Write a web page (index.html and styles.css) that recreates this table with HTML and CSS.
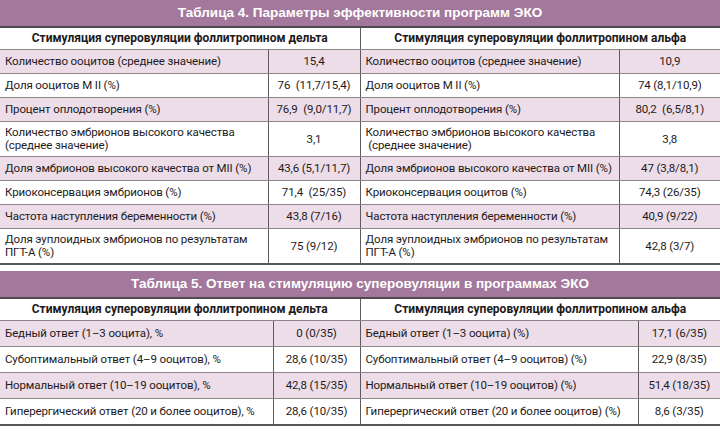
FILE: index.html
```html
<!DOCTYPE html>
<html lang="ru">
<head>
<meta charset="utf-8">
<link rel="stylesheet" href="styles.css">
</head>
<body>
<div class="page">
  <section class="tbl t4">
    <div class="title">Таблица 4. Параметры эффективности программ ЭКО</div>
    <table>
      <colgroup><col class="c1"><col class="c2"><col class="c3"><col class="c4"></colgroup>
      <thead>
        <tr><th colspan="2">Стимуляция суперовуляции фоллитропином дельта</th><th colspan="2" class="mid">Стимуляция суперовуляции фоллитропином альфа</th></tr>
      </thead>
      <tbody>
        <tr class="alt"><td>Количество ооцитов (среднее значение)</td><td class="v">15,4</td><td class="mid">Количество ооцитов (среднее значение)</td><td class="v">10,9</td></tr>
        <tr><td>Доля ооцитов M II (%)</td><td class="v">76&nbsp; (11,7/15,4)</td><td class="mid">Доля ооцитов M II (%)</td><td class="v">74 (8,1/10,9)</td></tr>
        <tr class="alt"><td>Процент оплодотворения (%)</td><td class="v">76,9&nbsp; (9,0/11,7)</td><td class="mid">Процент оплодотворения (%)</td><td class="v">80,2&nbsp; (6,5/8,1)</td></tr>
        <tr class="tall"><td>Количество эмбрионов высокого качества<br>(среднее значение)</td><td class="v">3,1</td><td class="mid">Количество эмбрионов высокого качества<br>&nbsp;(среднее значение)</td><td class="v">3,8</td></tr>
        <tr class="alt"><td>Доля эмбрионов высокого качества от MII (%)</td><td class="v">43,6 (5,1/11,7)</td><td class="mid">Доля эмбрионов высокого качества от MII (%)</td><td class="v">47 (3,8/8,1)</td></tr>
        <tr><td>Криоконсервация эмбрионов (%)</td><td class="v">71,4&nbsp; (25/35)</td><td class="mid">Криоконсервация ооцитов (%)</td><td class="v">74,3 (26/35)</td></tr>
        <tr class="alt"><td>Частота наступления беременности (%)</td><td class="v">43,8 (7/16)</td><td class="mid">Частота наступления беременности (%)</td><td class="v">40,9 (9/22)</td></tr>
        <tr class="tall"><td>Доля эуплоидных эмбрионов по результатам<br>ПГТ-А (%)</td><td class="v">75 (9/12)</td><td class="mid">Доля эуплоидных эмбрионов по результатам<br>ПГТ-А (%)</td><td class="v">42,8 (3/7)</td></tr>
      </tbody>
    </table>
  </section>
  <section class="tbl t5">
    <div class="title">Таблица 5. Ответ на стимуляцию суперовуляции в программах ЭКО</div>
    <table>
      <colgroup><col class="c1"><col class="c2"><col class="c3"><col class="c4"></colgroup>
      <thead>
        <tr><th colspan="2">Стимуляция суперовуляции фоллитропином дельта</th><th colspan="2" class="mid">Стимуляция суперовуляции фоллитропином альфа</th></tr>
      </thead>
      <tbody>
        <tr class="alt"><td>Бедный ответ (1–3 ооцита), %</td><td class="v">0 (0/35)</td><td class="mid">Бедный ответ (1–3 ооцита) (%)</td><td class="v">17,1 (6/35)</td></tr>
        <tr><td>Субоптимальный ответ (4–9 ооцитов), %</td><td class="v">28,6 (10/35)</td><td class="mid">Субоптимальный ответ (4–9 ооцитов) (%)</td><td class="v">22,9 (8/35)</td></tr>
        <tr class="alt"><td>Нормальный ответ (10–19 ооцитов), %</td><td class="v">42,8 (15/35)</td><td class="mid">Нормальный ответ (10–19 ооцитов) (%)</td><td class="v">51,4 (18/35)</td></tr>
        <tr><td>Гиперергический ответ (20 и более ооцитов), %</td><td class="v">28,6 (10/35)</td><td class="mid">Гиперергический ответ (20 и более ооцитов) (%)</td><td class="v">8,6 (3/35)</td></tr>
      </tbody>
    </table>
  </section>
</div>
</body>
</html>
```

FILE: styles.css
```css
* { box-sizing: border-box; }
html, body { margin: 0; padding: 0; background: #ffffff; }
body {
  font-family: Roboto, "Liberation Sans", sans-serif;
  color: #1e1a1b;
  width: 720px;
}
.page {
  display: flex;
  flex-direction: column;
  gap: 6px;
}
.title {
  height: 28px;
  background: #a4789c;
  border-bottom: 2px solid #4f4a4d;
  color: #ffffff;
  font-family: "Liberation Sans", Arial, sans-serif;
  font-weight: bold;
  font-size: 13.5px;
  line-height: 26px;
  text-align: center;
}
table {
  width: 720px;
  table-layout: fixed;
  border-collapse: collapse;
  border-bottom: 2px solid #5a5758;
}
.t4 .c1 { width: 268px; }
.t4 .c2 { width: 92px; }
.t4 .c3 { width: 259px; }
.t4 .c4 { width: 101px; }
.t5 .c1 { width: 273px; }
.t5 .c2 { width: 87px; }
.t5 .c3 { width: 278px; }
.t5 .c4 { width: 82px; }
th {
  box-sizing: content-box;
  height: 21px;
  padding: 0 4px;
  font-size: 12px;
  font-weight: bold;
  line-height: 15px;
  text-align: center;
  border-bottom: 1px solid #8c8788;
  white-space: nowrap;
}
td {
  box-sizing: content-box;
  height: 23px;
  padding: 0 4px 0 5px;
  font-size: 11.5px;
  letter-spacing: -0.12px;
  line-height: 13px;
  vertical-align: middle;
  border-bottom: 1px solid #8c8788;
  white-space: nowrap;
}
.t5 td { height: 25px; }
tr.tall td { height: 34px; }
tr.alt td { background: #ecdde8; }
td.v {
  text-align: center;
  border-left: 1px solid #5f5a5c;
  padding: 0 2px;
}
.mid { border-left: 1px solid #5f5a5c; }
tbody tr:last-child td { border-bottom: none; }
```
